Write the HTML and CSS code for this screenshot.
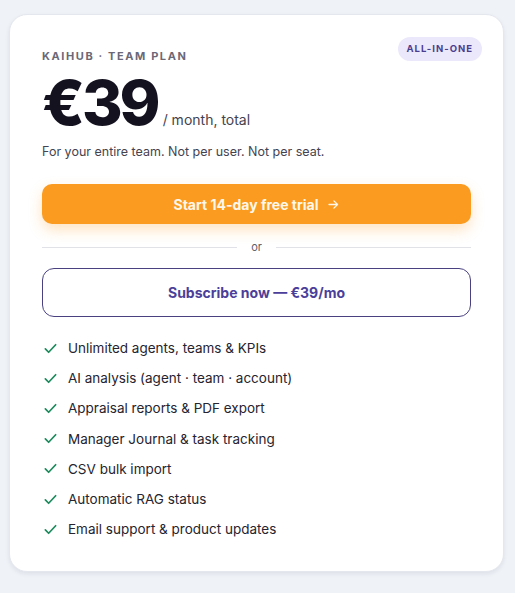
FILE: index.html
```html
<!DOCTYPE html>
<html lang="en">
<head>
<meta charset="utf-8">
<title>KaiHub · Team Plan</title>
<link rel="stylesheet" href="styles.css">
</head>
<body>
<main class="page">
  <section class="plan-card">
    <span class="badge">ALL-IN-ONE</span>
    <p class="eyebrow">KAIHUB · TEAM PLAN</p>
    <div class="price-row">
      <span class="price">€39</span>
      <span class="period">/ month, total</span>
    </div>
    <p class="note">For your entire team. Not per user. Not per seat.</p>

    <a class="btn btn-primary" href="#">Start 14-day free trial
      <svg class="arrow" viewBox="0 0 16 16" width="13" height="13" aria-hidden="true"><path d="M2.5 8h10.5M8.5 3.5 13 8l-4.5 4.5" fill="none" stroke="currentColor" stroke-width="1.6" stroke-linecap="round" stroke-linejoin="round"/></svg>
    </a>

    <div class="divider"><span>or</span></div>

    <a class="btn btn-outline" href="#">Subscribe now — €39/mo</a>

    <ul class="features">
      <li><svg class="check" viewBox="0 0 16 16" aria-hidden="true"><path d="M2.5 8.5l3.5 3.5 7.5-8" /></svg>Unlimited agents, teams &amp; KPIs</li>
      <li><svg class="check" viewBox="0 0 16 16" aria-hidden="true"><path d="M2.5 8.5l3.5 3.5 7.5-8" /></svg>AI analysis (agent · team · account)</li>
      <li><svg class="check" viewBox="0 0 16 16" aria-hidden="true"><path d="M2.5 8.5l3.5 3.5 7.5-8" /></svg>Appraisal reports &amp; PDF export</li>
      <li><svg class="check" viewBox="0 0 16 16" aria-hidden="true"><path d="M2.5 8.5l3.5 3.5 7.5-8" /></svg>Manager Journal &amp; task tracking</li>
      <li><svg class="check" viewBox="0 0 16 16" aria-hidden="true"><path d="M2.5 8.5l3.5 3.5 7.5-8" /></svg>CSV bulk import</li>
      <li><svg class="check" viewBox="0 0 16 16" aria-hidden="true"><path d="M2.5 8.5l3.5 3.5 7.5-8" /></svg>Automatic RAG status</li>
      <li><svg class="check" viewBox="0 0 16 16" aria-hidden="true"><path d="M2.5 8.5l3.5 3.5 7.5-8" /></svg>Email support &amp; product updates</li>
    </ul>
  </section>
</main>
</body>
</html>
```

FILE: styles.css
```css
* { box-sizing: border-box; }

html, body {
  margin: 0;
  padding: 0;
  background: #eff2f7;
  font-family: "Inter", "Noto Sans", sans-serif;
  color: #1d1b29;
}

.page {
  padding: 14px 11px 21px 9px;
}

.plan-card {
  position: relative;
  background: #ffffff;
  border: 1px solid #e4e7ee;
  border-radius: 18px;
  box-shadow: 0 2px 4px rgba(30, 35, 60, 0.08);
  padding: 33px 32px 32px 32px;
}

.badge {
  position: absolute;
  top: 22px;
  right: 21px;
  background: #ece8fb;
  color: #4a3d8f;
  font-size: 9.5px;
  font-weight: 700;
  letter-spacing: 1px;
  padding: 6px 9px;
  border-radius: 12px;
  line-height: 12px;
}

.eyebrow {
  margin: 0;
  font-size: 11px;
  font-weight: 700;
  letter-spacing: 1.6px;
  color: #6a6877;
  line-height: 16px;
}

.price-row {
  display: flex;
  align-items: baseline;
  gap: 5px;
  margin-top: 6px;
  height: 66px;
}

.price {
  font-size: 62px;
  font-weight: 800;
  letter-spacing: -3px;
  color: #14121f;
  line-height: 66px;
}

.period {
  font-size: 14px;
  color: #45434f;
}

.note {
  margin: 7px 0 0;
  font-size: 12.5px;
  color: #45434f;
  line-height: 18px;
}

.btn {
  display: flex;
  align-items: center;
  justify-content: center;
  gap: 8px;
  text-decoration: none;
  font-size: 14px;
  font-weight: 700;
}

.btn-primary {
  margin-top: 23px;
  height: 40px;
  border-radius: 10px;
  background: #fb9b1f;
  color: #fff8ea;
  box-shadow: 0 6px 14px rgba(251, 155, 31, 0.28);
}

.divider {
  display: flex;
  align-items: center;
  gap: 14px;
  margin: 16px 0 14px;
  font-size: 11px;
  color: #5f5d6b;
}

.divider::before,
.divider::after {
  content: "";
  flex: 1;
  height: 1px;
  background: #e1e2e8;
}

.btn-outline {
  height: 49px;
  border: 1px solid #4a4280;
  border-radius: 12px;
  color: #4b3f9a;
  background: #fff;
}

.features {
  list-style: none;
  margin: 21px 0 0;
  padding: 0;
  display: flex;
  flex-direction: column;
  gap: 10px;
}

.features li {
  display: flex;
  align-items: center;
  gap: 10px;
  font-size: 13.5px;
  line-height: 20.2px;
  color: #26242f;
}

.check {
  width: 15px;
  height: 15px;
  flex: none;
  margin-left: 1px;
  fill: none;
  stroke: #1b8a5c;
  stroke-width: 1.8;
  stroke-linecap: round;
  stroke-linejoin: round;
}
```
